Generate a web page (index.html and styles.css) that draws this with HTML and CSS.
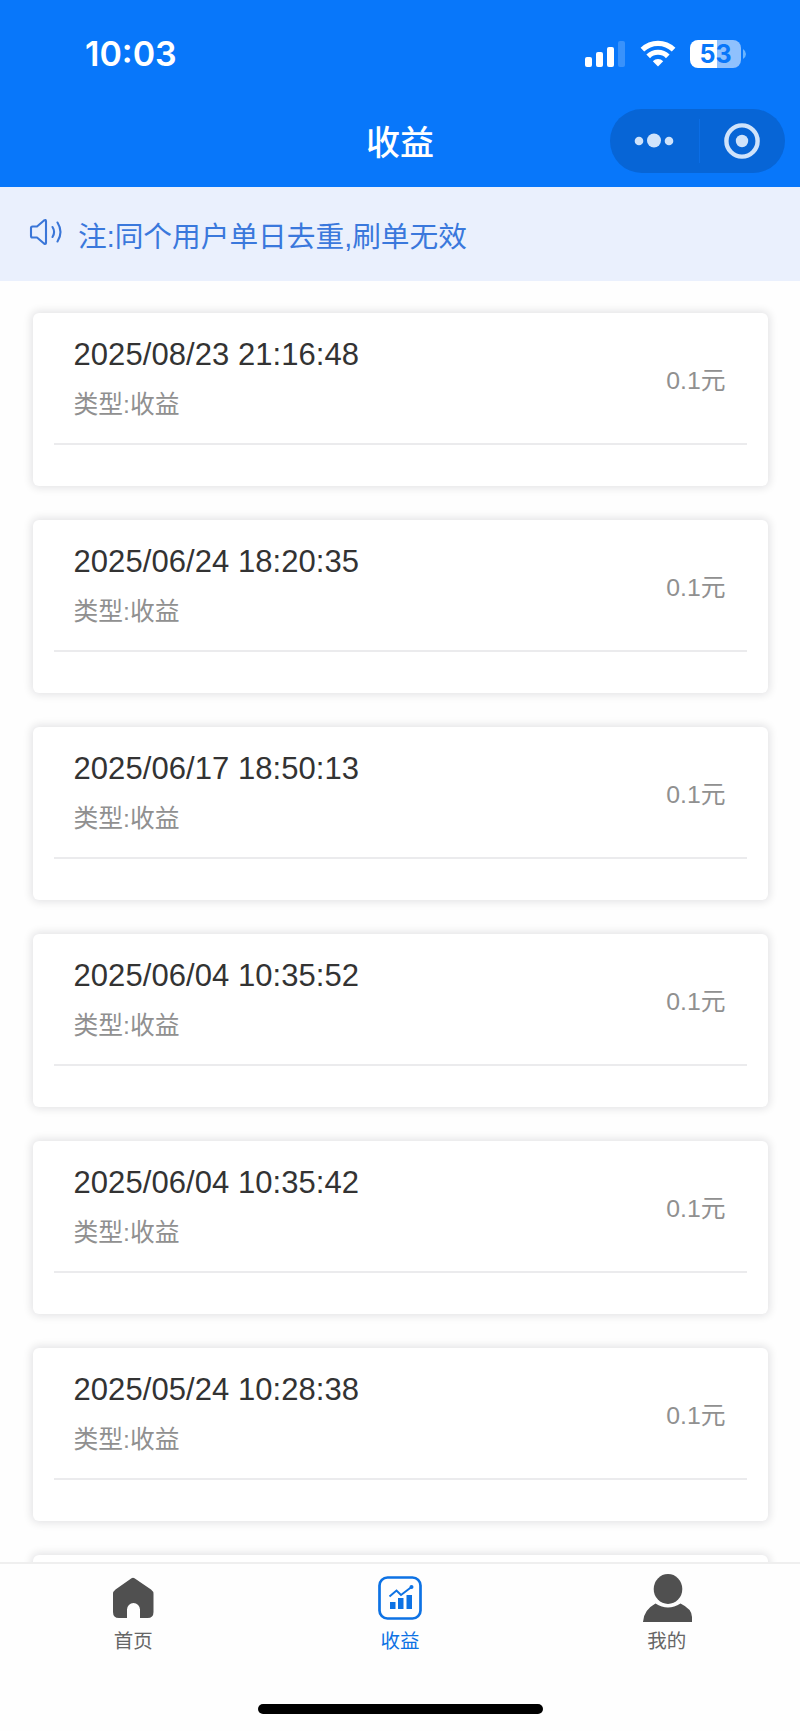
FILE: index.html
```html
<!DOCTYPE html>
<html lang="zh-CN">
<head>
  <meta charset="UTF-8" />
  <meta name="viewport" content="width=device-width, initial-scale=1.0"/>
  <title>收益</title>
  <link rel="stylesheet" href="styles.css">
</head>
<body>
  <header class="header">
    <div class="status-bar">
      <span class="time">10:03</span>
      <div class="status-icons">
        <svg class="signal" width="40" height="26" viewBox="0 0 40 26" fill="#fff">
          <rect x="0" y="16" width="7" height="10" rx="2"/>
          <rect x="11" y="11" width="7" height="15" rx="2"/>
          <rect x="22" y="6" width="7" height="20" rx="2"/>
          <rect x="33" y="0" width="7" height="26" rx="2" opacity=".2"/>
        </svg>
        <svg class="wifi" width="36" height="27" viewBox="0 0 36 27" fill="none" stroke="#fff" stroke-width="5.2">
          <path d="M2.4 9.700a22.400 22.400 0 0 1 31.200 0"/>
          <path d="M8.200 16.300a13.900 13.900 0 0 1 19.600 0"/>
          <path d="M18 26.500l-5.200-5.300a7.400 7.400 0 0 1 10.400 0z" fill="#fff" stroke="none"/>
        </svg>
        <div class="battery"><span>5</span><span>3</span></div>
        <svg class="battery-tip" width="3" height="10" viewBox="0 0 3 10"><path d="M0 0q3 2 3 5t-3 5z" fill="#6bb5ff"/></svg>
      </div>
    </div>
    <div class="nav-bar">
      <h1>收益</h1>
      <div class="capsule">
        <svg width="40" height="16" viewBox="0 0 40 16" fill="#cfe3fb">
          <circle cx="5" cy="8" r="4.3"/>
          <circle cx="20" cy="7.500" r="7"/>
          <circle cx="35" cy="8" r="4.300"/>
        </svg>
        <i class="capsule-line"></i>
        <svg width="36" height="36" viewBox="0 0 36 36">
          <circle cx="18" cy="18" r="15.600" fill="none" stroke="#cfe3fb" stroke-width="4.400"/>
          <circle cx="18" cy="18" r="6.200" fill="#cfe3fb"/>
        </svg>
      </div>
    </div>
  </header>

  <div class="notice">
    <svg width="34" height="28" viewBox="0 0 34 28" fill="none" stroke="#3a76d8" stroke-width="2.100" stroke-linejoin="round" stroke-linecap="round">
      <path d="M3.500 8.500h4.500L15 2.500q2-1.300 2 .8v21.400q0 2-2 .8L8 19.500H3.500q-1.500 0-1.500-1.500v-8q0-1.500 1.500-1.500z"/>
      <path d="M23.500 9q3.200 5 0 10"/>
      <path d="M28.500 4.500q6 9.500 0 19"/>
    </svg>
    <span>注:同个用户单日去重,刷单无效</span>
  </div>

  <main class="list">
    <div class="card">
      <div class="cell">
        <div>
          <p class="date">2025/08/23 21:16:48</p>
          <p class="type">类型:收益</p>
        </div>
        <span class="amount">0.1元</span>
      </div>
    </div>
    <div class="card">
      <div class="cell">
        <div>
          <p class="date">2025/06/24 18:20:35</p>
          <p class="type">类型:收益</p>
        </div>
        <span class="amount">0.1元</span>
      </div>
    </div>
    <div class="card">
      <div class="cell">
        <div>
          <p class="date">2025/06/17 18:50:13</p>
          <p class="type">类型:收益</p>
        </div>
        <span class="amount">0.1元</span>
      </div>
    </div>
    <div class="card">
      <div class="cell">
        <div>
          <p class="date">2025/06/04 10:35:52</p>
          <p class="type">类型:收益</p>
        </div>
        <span class="amount">0.1元</span>
      </div>
    </div>
    <div class="card">
      <div class="cell">
        <div>
          <p class="date">2025/06/04 10:35:42</p>
          <p class="type">类型:收益</p>
        </div>
        <span class="amount">0.1元</span>
      </div>
    </div>
    <div class="card">
      <div class="cell">
        <div>
          <p class="date">2025/05/24 10:28:38</p>
          <p class="type">类型:收益</p>
        </div>
        <span class="amount">0.1元</span>
      </div>
    </div>
    <div class="card"></div>
  </main>

  <footer class="footer">
    <nav class="tabs">
      <a class="tab">
        <svg width="50" height="50" viewBox="0 0 50 50">
          <path d="M23.500 5.300q1.500-1 3 0L43 16.500q2.500 1.800 2.500 4.500v18q0 6-6 6H32V36.500a6.500 6.500 0 0 0-13 0V45h-8q-6 0-6-6V21q0-2.700 2.500-4.500z" fill="#505050"/>
        </svg>
        <span>首页</span>
      </a>
      <a class="tab active">
        <svg width="50" height="50" viewBox="0 0 50 50" fill="none" stroke="#0d72e4">
          <rect x="4.500" y="4.500" width="41" height="41" rx="8" stroke-width="2.700"/>
          <path d="M14.500 23.500l7-6 4.500 4.500 10.500-8" stroke-width="2"/>
          <circle cx="36.500" cy="14" r="2" fill="#0d72e4" stroke="none"/>
          <path d="M15 29h5.500v7H15zM23 25h5.500v11H23zM31.500 22H37v14h-5.500z" fill="#0d72e4" stroke="none"/>
        </svg>
        <span>收益</span>
      </a>
      <a class="tab">
        <svg width="50" height="50" viewBox="0 0 50 50" fill="#505050">
          <ellipse cx="26" cy="16" rx="14.300" ry="15"/>
          <path d="M1 49Q1.500 37 13.500 30.500q12.500 8 25 0Q50 36 50 44v5z"/>
        </svg>
        <span>我的</span>
      </a>
    </nav>
    <div class="home-indicator"></div>
  </footer>
</body>
</html>
```

FILE: styles.css
```css
* { box-sizing: border-box; }
body {
  margin: 0;
  height: 1731px;
  display: flex;
  flex-direction: column;
  overflow: hidden;
  background: #fefefe;
  color: #333;
  font-family: "Liberation Sans", "Noto Sans CJK SC", sans-serif;
}
h1, p { margin: 0; }
svg { display: block; flex-shrink: 0; }

.header { height: 187px; flex-shrink: 0; background: #0877fa; color: #fff; }
.status-bar {
  height: 107px;
  padding: 0 54px 0 85px;
  display: flex;
  justify-content: space-between;
  align-items: center;
}
.time { font: 600 34px/40px Inter, sans-serif; }
.status-icons { display: flex; align-items: center; }
.wifi { margin-left: 15px; }
.battery {
  width: 51px;
  height: 28px;
  margin-left: 14px;
  display: flex;
  justify-content: center;
  border-radius: 8px;
  background: linear-gradient(90deg, #fff 27px, #8fc1fd 27px);
  color: #0877fa;
  font: 700 25px/28px Inter, sans-serif;
}
.battery-tip { margin-left: 2px; }
.nav-bar { height: 80px; display: grid; grid-template-columns: 1fr auto 1fr; }
.nav-bar h1 {
  grid-column: 2;
  font-size: 34px;
  font-weight: 500;
  line-height: 73px;
}
.capsule {
  justify-self: end;
  width: 175px;
  height: 64px;
  margin: 2px 15px 0 0;
  padding: 0 25px 0 24px;
  display: flex;
  align-items: center;
  justify-content: space-between;
  border-radius: 32px;
  background: #0765d6;
}
.capsule-line { width: 1px; height: 44px; background: #0b6ee6; }

.notice {
  height: 94px;
  flex-shrink: 0;
  padding: 0 29px;
  display: flex;
  align-items: center;
  gap: 15px;
  background: #eaf0fd;
  color: #3a78dc;
  font-size: 28.7px;
}
.notice svg { margin-bottom: 4px; }

.list {
  flex: 1;
  min-height: 0;
  overflow: hidden;
  padding: 32px 32.5px 0;
}
.card {
  height: 173px;
  margin-bottom: 34px;
  padding: 0 21px;
  border-radius: 6px;
  background: #fff;
  box-shadow: 0 0 9px 2px rgba(0, 0, 30, .11);
}
.cell {
  height: 132px;
  padding: 22px 21px 0 20px;
  display: flex;
  justify-content: space-between;
  border-bottom: 2px solid #ebebed;
}
.date { font-size: 31px; line-height: 40px; letter-spacing: .06px; }
.type { margin-top: 10px; font-size: 24.8px; line-height: 39px; color: #909090; }
.amount { margin-top: 27px; font-size: 24.8px; line-height: 38px; color: #909090; }

.footer { height: 169px; flex-shrink: 0; border-top: 2px solid #efefef; background: #fefefe; }
.tabs { height: 138px; display: flex; }
.tab {
  flex: 1;
  padding-top: 9px;
  display: flex;
  flex-direction: column;
  align-items: center;
  font-size: 19.5px;
  line-height: 30px;
  color: #666;
}
.tab span { margin-top: 3px; }
.active { color: #0d72e4; }
.home-indicator { width: 285px; height: 10px; margin: 2px auto 0; border-radius: 5px; background: #000; }
```
